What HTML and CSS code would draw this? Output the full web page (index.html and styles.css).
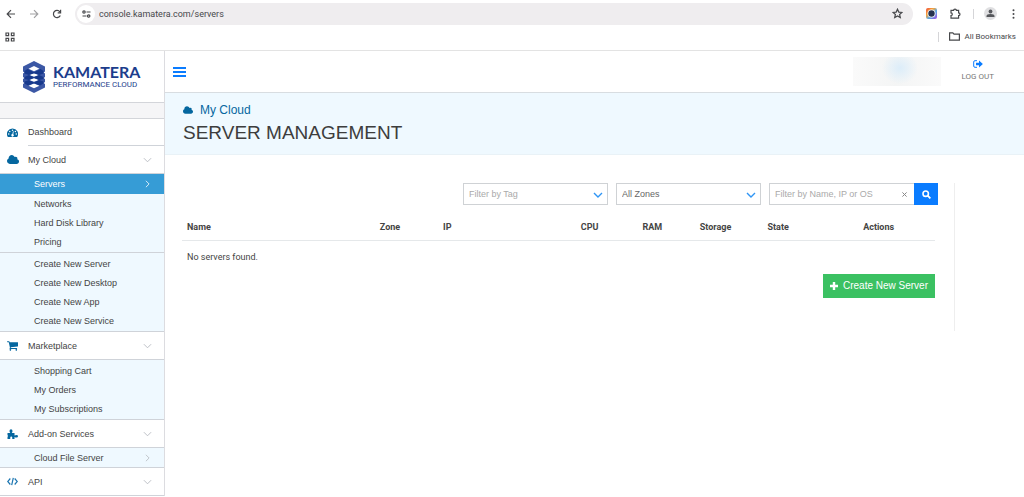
FILE: index.html
```html
<!DOCTYPE html>
<html lang="en">
<head>
<meta charset="utf-8">
<meta name="viewport" content="width=device-width, initial-scale=1">
<title>Server Management</title>
<link rel="stylesheet" href="styles.css">
</head>
<body>
<svg class="defs" aria-hidden="true">
  <symbol id="cloud" viewBox="-64 126 1920 1410"><path d="M1856 1152q0 159-112.500 271.500T1472 1536H384q-185 0-316.500-131.500T-64 1088q0-132 71-241.500T195 681q-2-28-2-43 0-212 150-362t362-150q158 0 286.500 88T1179 444q70-62 166-62 106 0 181 75t75 181q0 75-41 138 129 30 213 134.500t84 239.500z"/></symbol>
  <symbol id="down" viewBox="0 0 10 6"><path d="M1 1l4 4 4-4" fill="none" stroke="currentColor"/></symbol>
  <symbol id="right" viewBox="0 0 6 10"><path d="M1 1l4 4-4 4" fill="none" stroke="currentColor"/></symbol>
</svg>

<header class="browser">
  <div class="toolbar">
    <button class="tool" aria-label="Back"><svg width="10" height="10" viewBox="0 0 10 10"><path d="M9 5H1.500M5 1.200L1.200 5 5 8.800" class="line"/></svg></button>
    <button class="tool faded" aria-label="Forward"><svg width="10" height="10" viewBox="0 0 10 10"><path d="M1 5h7.500M5 1.200L8.800 5 5 8.800" class="line"/></svg></button>
    <button class="tool" aria-label="Reload"><svg width="10" height="10" viewBox="0 0 10 10"><path d="M8.300 6.500A3.600 3.600 0 1 1 7.900 2.800M8.600.8v3H5.700" class="line"/></svg></button>
    <div class="address">
      <button class="site" aria-label="Site information"><svg width="9" height="8" viewBox="0 0 9 8"><path d="M4.500 2H8.500M.5 6h4" class="line"/><circle cx="2" cy="2" r="1.200" class="line"/><circle cx="6.700" cy="6" r="1.200" class="line"/></svg></button>
      <input class="url" aria-label="Address" value="console.kamatera.com/servers">
      <button class="tool" aria-label="Bookmark this page"><svg width="11" height="11" viewBox="0 0 11 11"><path d="M5.500 1.200l1.300 2.900 3.200.3-2.400 2.100.7 3.100-2.800-1.700-2.800 1.700.7-3.100L1 4.400l3.200-.3z" class="line"/></svg></button>
    </div>
    <div class="extras">
      <button class="tool" aria-label="Camera extension"><svg width="11" height="11" viewBox="0 0 11 11"><defs><linearGradient id="cam" x1="0" y1="0" x2="1" y2="1"><stop offset="0" stop-color="#f0503c"/><stop offset=".35" stop-color="#f4a63c"/><stop offset=".6" stop-color="#58a8e8"/><stop offset="1" stop-color="#a44be0"/></linearGradient></defs><rect width="11" height="11" rx="2" fill="url(#cam)"/><circle cx="5.500" cy="5.500" r="4" fill="#fff"/><circle cx="5.500" cy="5.500" r="3.200" fill="#25324f"/></svg></button>
      <button class="tool" aria-label="Extensions"><svg width="11" height="11" viewBox="0 0 11 11"><path d="M1 2.300h2.600a1.400 1.200 0 0 1 2.800 0h2.200v2.500a1.400 1.400 0 0 1 0 2.800v2.600H1V7.500a1.300 1.300 0 0 0 0-2.600z" class="line"/></svg></button>
      <span class="rule"></span>
      <button class="tool" aria-label="Profile"><svg width="13" height="13" viewBox="0 0 13 13"><circle cx="6.500" cy="6.500" r="6.500" fill="#dfdfe1"/><circle cx="6.500" cy="4.500" r="1.900" fill="#56585c"/><path d="M2.500 10V9q0-2 4-2t4 2v1z" fill="#56585c"/></svg></button>
      <button class="tool menu" aria-label="Menu"><svg width="3" height="10" viewBox="0 0 3 10"><circle cx="1.500" cy="1.200" r="1"/><circle cx="1.500" cy="5" r="1"/><circle cx="1.500" cy="8.800" r="1"/></svg></button>
    </div>
  </div>
  <div class="bookmarks">
    <button class="tool" aria-label="Apps"><svg width="10" height="10" viewBox="0 0 10 10"><path d="M1 1h2.600v2.600H1zM6.400 1H9v2.600H6.400zM1 6.400h2.600V9H1zM6.400 6.400H9V9H6.400z" class="line"/></svg></button>
    <div class="all">
      <span class="rule"></span>
      <button class="tool folder"><svg width="11" height="9" viewBox="0 0 11 9"><path d="M.6 8.200V.8h3.200l1.200 1.300h5.400v6.100z" class="line"/></svg>All Bookmarks</button>
    </div>
  </div>
</header>

<div class="app">
  <aside class="sidebar">
    <a class="logo" href="#">
      <svg width="24" height="32" viewBox="0 0 24 32">
        <path fill="#3c58a5" fill-rule="evenodd" d="M12 0l11 5.500v5l-1.500 1 1.500 1v3.500l-1.500 1 1.500 1v3l-1.500 1 1.500 1v3.500L12 32 1 26.500V23l1.500-1L1 21v-3l1.500-1L1 16v-3.500l1.500-1-1.500-1v-5zM12 5L6.500 7.700 12 10.300l5.500-2.600zM12 12.200l-5 1.800 5 1.800 5-1.800zM12 17.200l-5 1.800 5 1.800 5-1.800zM12 22.500l-5.500 2.200 5.500 2.500 5.500-2.500z"/>
        <path fill="#17398c" d="M2.500 10l3-2L12 11.200 18.500 8l3 2v2.500L17 14l-5-1.800L7 14l-4.500-1.500zM2.500 16L7 14l5 2.300 5-2.300 4.500 2v2L17 19l-5-2.200L7 19l-4.500-1zM2.500 20.500L7 19l5 2.400 5-2.400 4.500 1.500v2l-3.500 2-6-2.300-6 2.300-3.500-2z"/>
      </svg>
      <span class="brand"><strong>KAMATERA</strong><small>PERFORMANCE CLOUD</small></span>
    </a>
    <div class="strip"></div>
    <nav>
      <a class="section first" href="#"><svg class="icon" width="11" height="10" viewBox="0 0 22 20"><path d="M11 1a11 11 0 0 0-9.300 17h18.600A11 11 0 0 0 11 1z"/><g fill="#fff"><circle cx="11" cy="4.500" r="1.500"/><circle cx="5.500" cy="7" r="1.500"/><circle cx="3.500" cy="12" r="1.500"/><circle cx="16.800" cy="7" r="1.500"/><circle cx="18.500" cy="12" r="1.500"/><path d="M12 6.500l1.500.4-1 5.500a2.500 2.500 0 1 1-1.700-.4z"/></g></svg><span>Dashboard</span></a>
      <a class="section" href="#"><svg class="icon wide" width="12" height="9"><use href="#cloud"/></svg><span>My Cloud</span><svg class="arrow" width="9" height="6"><use href="#down"/></svg></a>
      <ul class="sub lead">
        <li><a class="active" href="#">Servers<svg width="5" height="8"><use href="#right"/></svg></a></li>
        <li><a href="#">Networks</a></li>
        <li><a href="#">Hard Disk Library</a></li>
        <li><a href="#">Pricing</a></li>
      </ul>
      <ul class="sub">
        <li><a href="#">Create New Server</a></li>
        <li><a href="#">Create New Desktop</a></li>
        <li><a href="#">Create New App</a></li>
        <li><a href="#">Create New Service</a></li>
      </ul>
      <a class="section" href="#"><svg class="icon" width="11" height="10" viewBox="0 256 1664 1408"><path d="M640 1536q0 52-38 90t-90 38-90-38-38-90 38-90 90-38 90 38 38 90zm896 0q0 52-38 90t-90 38-90-38-38-90 38-90 90-38 90 38 38 90zm128-1088v512q0 24-16.500 42.500T1607 1024L563 1146q13 60 13 70 0 16-24 64h920q26 0 45 19t19 45-19 45-45 19H448q-26 0-45-19t-19-45q0-11 8-31.500t16-36 21.500-40T445 1207L268 384H64q-26 0-45-19T0 320t19-45 45-19h256q16 0 28.500 6.500T368 278t13 24.500 8 26 5.500 29.500 4.500 26h1201q26 0 45 19t19 45z"/></svg><span>Marketplace</span><svg class="arrow" width="9" height="6"><use href="#down"/></svg></a>
      <ul class="sub">
        <li><a href="#">Shopping Cart</a></li>
        <li><a href="#">My Orders</a></li>
        <li><a href="#">My Subscriptions</a></li>
      </ul>
      <a class="section" href="#"><svg class="icon" width="11" height="10" viewBox="0 0 22 20"><path d="M1 8h5.500Q5 6 5 4q0-3.500 3-3.500T11 4q0 2-1.500 4H15v5q2-1 4-1 3 0 3 2.500T19 17q-2 0-4-1v4h-4.500v-3q0-2-2-2t-2 2v3H1v-4l1-2-1-2z"/></svg><span>Add-on Services</span><svg class="arrow" width="9" height="6"><use href="#down"/></svg></a>
      <ul class="sub single">
        <li><a href="#">Cloud File Server<svg width="5" height="8"><use href="#right"/></svg></a></li>
      </ul>
      <a class="section" href="#"><svg class="icon" width="11" height="9" viewBox="0 0 11 9"><path d="M3.300 1.500L.7 4.500l2.600 3M7.700 1.500l2.600 3-2.600 3M6.300.8L4.700 8.200" fill="none" stroke="#1b75b0" stroke-width="1.200"/></svg><span>API</span><svg class="arrow" width="9" height="6"><use href="#down"/></svg></a>
    </nav>
  </aside>

  <main class="main">
    <div class="topbar">
      <button class="burger" aria-label="Toggle menu"><i></i><i></i><i></i></button>
      <div class="account"></div>
      <a class="logout" href="#"><svg width="10" height="8" viewBox="0 0 10 8"><path d="M4 .7H2Q.7.700.7 2v4Q.7 7.300 2 7.300h2" fill="none" stroke="#0a7cff"/><path d="M3 2.700h3V.4L9.900 4 6 7.600V5.300H3z"/></svg>LOG OUT</a>
    </div>
    <div class="heading">
      <a class="crumb" href="#"><svg width="10" height="8"><use href="#cloud"/></svg>My Cloud</a>
      <h1>SERVER MANAGEMENT</h1>
    </div>
    <section class="panel">
      <form class="filters">
        <div class="pick"><select class="muted" aria-label="Filter by Tag"><option>Filter by Tag</option></select><svg width="10" height="6"><use href="#down"/></svg></div>
        <div class="pick"><select aria-label="Zone"><option>All Zones</option></select><svg width="10" height="6"><use href="#down"/></svg></div>
        <div class="search">
          <input type="text" aria-label="Filter by Name, IP or OS" placeholder="Filter by Name, IP or OS">
          <button type="reset" class="clear" aria-label="Clear"><svg width="5" height="5" viewBox="0 0 5 5"><path d="M.4.400l4.200 4.200M4.600.4L.4 4.600" fill="none" stroke="#888"/></svg></button>
          <button type="button" class="go" aria-label="Search"><svg width="9" height="9" viewBox="0 0 9 9"><circle cx="3.700" cy="3.700" r="2.700" fill="none" stroke="#fff" stroke-width="1.600"/><path d="M5.700 5.700l2.700 2.700" stroke="#fff" stroke-width="1.800"/></svg></button>
        </div>
      </form>
      <div class="list">
        <table>
          <colgroup><col class="c-name"><col class="c-zone"><col class="c-ip"><col class="c-cpu"><col class="c-ram"><col class="c-storage"><col class="c-state"><col></colgroup>
          <thead><tr><th>Name</th><th>Zone</th><th>IP</th><th>CPU</th><th>RAM</th><th>Storage</th><th>State</th><th>Actions</th></tr></thead>
          <tbody><tr><td colspan="8">No servers found.</td></tr></tbody>
        </table>
        <button class="create"><svg width="8" height="8" viewBox="0 0 8 8"><path d="M4 0v8M0 4h8" stroke="#fff" stroke-width="2.400"/></svg>Create New Server</button>
      </div>
    </section>
  </main>
</div>
</body>
</html>
```

FILE: styles.css
```css
* { box-sizing: border-box; }
body { margin: 0; background: #fff; color: #444; font: 9px/12px "Liberation Sans", Arial, sans-serif; }
a { color: inherit; text-decoration: none; }
button, input, select { font: inherit; color: inherit; margin: 0; padding: 0; border: 0; border-radius: 0; background: none; }
svg { display: block; flex: none; fill: currentColor; }
ul { list-style: none; margin: 0; padding: 0; }
.defs { display: none; }
.line { fill: none; stroke: currentColor; stroke-width: 1.2; }

/* Browser frame */
.browser { border-bottom: 1px solid #e3e3e3; font-family: Roboto, sans-serif; color: #47484b; }
.toolbar { display: flex; align-items: center; height: 27px; padding: 0 9px 0 6px; gap: 13px; }
.tool { display: flex; align-items: center; }
.faded { color: #a0a0a2; }
.address { display: flex; flex: 1; align-items: center; height: 22px; padding: 0 10px 0 2px; border-radius: 11px; background: #efedef; }
.site { display: flex; align-items: center; justify-content: center; width: 18px; height: 18px; border-radius: 9px; background: #fff; }
.url { flex: 1; min-width: 0; margin-left: 4px; }
.extras { display: flex; align-items: center; gap: 13px; }
.extras .rule { margin: 0 -3px 0 -1px; }
.extras .menu { margin-left: 2px; }
.rule { width: 1px; height: 10px; background: #d5d5d8; }
.bookmarks { display: flex; align-items: center; justify-content: space-between; height: 23px; padding: 0 8px 4px 5px; font-size: 8px; }
.all { display: flex; align-items: center; gap: 10px; }
.folder { gap: 4px; }

/* Sidebar */
.app { display: flex; align-items: stretch; }
.sidebar { flex: none; width: 165px; border-right: 1px solid #dcdce0; }
.logo { display: flex; align-items: center; gap: 7px; height: 52px; padding-left: 22px; border-bottom: 1px solid #d3d5da; color: #1c3d8c; }
.brand { display: flex; flex-direction: column; font-family: Lato, sans-serif; }
.brand strong { font-size: 16px; line-height: 17px; }
.brand small { font: 8px/10px Roboto, sans-serif; white-space: nowrap; }
.strip { height: 16px; background: #f5f5f7; border-bottom: 1px solid #d3d5da; }
.section { display: flex; align-items: center; height: 28px; padding: 0 12px 0 7px; border-bottom: 1px solid #cfd3d9; }
.section span { flex: 1; }
.section.first { height: 27px; padding: 0; border: 0; }
.section.first span { display: flex; align-items: center; height: 27px; border-bottom: 1px solid #cfd3d9; }
.section.first .icon { margin-left: 7px; }
.icon { color: #05679f; margin-right: 10px; }
.icon.wide { margin-right: 9px; }
.arrow { color: #b5b9bf; }
.sub { padding: 1px 0; background: #eff9ff; border-bottom: 1px solid #cfd3d9; }
.sub.lead { padding-top: 0; }
.sub.single { padding: 0; }
.sub a { display: flex; align-items: center; justify-content: space-between; height: 19px; padding: 0 14px 0 34px; }
.sub svg { color: #b5b9bf; }
.sub .active { height: 20px; background: #369cd6; color: #fff; }
.sub .active svg { color: #fff; }

/* Main column */
.main { flex: 1; min-width: 0; }
.topbar { display: flex; align-items: center; height: 42px; padding: 0 30px 0 8px; border-bottom: 1px solid #d8dde1; }
.burger { display: flex; flex-direction: column; gap: 2px; width: 13px; }
.burger i { height: 2px; background: #0a7cff; }
.account { width: 88px; height: 29px; margin-left: auto; background: radial-gradient(ellipse 18px 16px at 47px 11px, #dcedf9, transparent), linear-gradient(90deg, #fafafa, #f4f5f5 50%, #fafafa); }
.logout { display: flex; flex-direction: column; align-items: center; gap: 3px; margin-left: 21px; font: 8px/12px Roboto, sans-serif; color: #777; }
.logout svg { color: #0a7cff; }
.heading { padding: 9px 18px 10px; background: #eff9ff; border-bottom: 1px solid #e9f2f7; }
.crumb { display: flex; align-items: center; gap: 7px; font-size: 12px; line-height: 16px; color: #05679f; }
h1 { margin: 4px 0 0; font-size: 19px; line-height: 22px; font-weight: 400; color: #3d3d3d; }
.panel { margin: 28px 69px 0 0; padding: 0 16px 33px 17px; border-right: 1px solid #eee; }
.filters { display: flex; justify-content: flex-end; gap: 8px; }
.pick { position: relative; width: 145px; }
.pick select { display: block; appearance: none; width: 100%; height: 22px; padding: 0 20px 0 5px; border: 1px solid #cfd2d5; color: #666; }
.pick .muted { color: #aaa; }
.pick svg { position: absolute; right: 5px; top: 9px; color: #2f95f5; pointer-events: none; stroke-width: 1.4; }
.search { display: flex; align-items: center; width: 169px; height: 22px; border: 1px solid #cfd2d5; border-right: 0; }
.search input { flex: 1; min-width: 0; padding-left: 5px; }
.search input::placeholder { color: #aaa; opacity: 1; }
.clear { padding: 4px 7px 4px 4px; }
.go { display: flex; align-items: center; justify-content: center; width: 24px; height: 22px; background: #0a7cff; }
.list { display: flex; flex-direction: column; margin-right: 3px; font-family: Roboto, sans-serif; }
table { width: 100%; table-layout: fixed; border-collapse: collapse; }
th, td { padding: 0 5px; text-align: left; }
th { height: 35px; padding-top: 9px; border-bottom: 1px solid #e5e8ea; }
td { height: 34px; }
.c-name { width: 25.6%; }
.c-zone { width: 8.4%; }
.c-ip { width: 18.3%; }
.c-cpu { width: 8.2%; }
.c-ram { width: 7.6%; }
.c-storage { width: 9%; }
.c-state { width: 12.7%; }
.create { display: flex; align-items: center; gap: 5px; align-self: flex-end; height: 24px; padding: 0 7px; background: #3bc162; color: #fff; font: 10px/12px "Liberation Sans", Arial, sans-serif; }
```
